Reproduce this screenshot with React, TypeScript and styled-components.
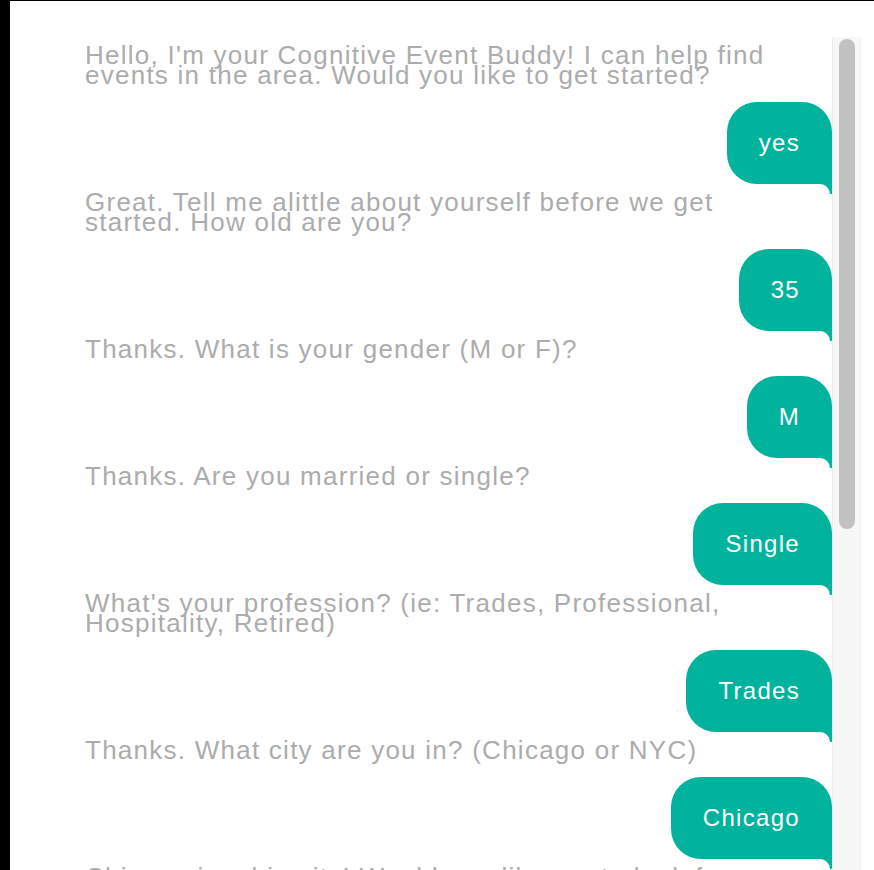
import React from "react";
import styled, { createGlobalStyle } from "styled-components";

type Message = { from: "bot" | "user"; text: string };

const messages: Message[] = [
  { from: "bot", text: "Hello, I'm your Cognitive Event Buddy! I can help find events in the area. Would you like to get started?" },
  { from: "user", text: "yes" },
  { from: "bot", text: "Great. Tell me alittle about yourself before we get started. How old are you?" },
  { from: "user", text: "35" },
  { from: "bot", text: "Thanks. What is your gender (M or F)?" },
  { from: "user", text: "M" },
  { from: "bot", text: "Thanks. Are you married or single?" },
  { from: "user", text: "Single" },
  { from: "bot", text: "What's your profession? (ie: Trades, Professional, Hospitality, Retired)" },
  { from: "user", text: "Trades" },
  { from: "bot", text: "Thanks. What city are you in? (Chicago or NYC)" },
  { from: "user", text: "Chicago" },
  { from: "bot", text: "Chicago is a big city! Would you like me to look for events this weekend?" },
  { from: "user", text: "yes" },
];

// fake scrollbar, the screenshot browser hides the real one
const thumbHeight = 490;

const GlobalStyle = createGlobalStyle`
  html, body {
    margin: 0;
    height: 100%;
    background: #000;
  }
  #root {
    height: 100%;
  }
`;

export default function App() {
  return (
    <>
      <GlobalStyle />
      <Frame>
        <ChatColumn>
          {messages.map((m, i) =>
            m.from === "bot" ? (
              <BotText key={i}>{m.text}</BotText>
            ) : (
              <UserRow key={i}>
                <Bubble>{m.text}</Bubble>
              </UserRow>
            )
          )}
        </ChatColumn>
        <ScrollTrack>
          <ScrollThumb style={{ height: thumbHeight }} />
        </ScrollTrack>
      </Frame>
    </>
  );
}

const Frame = styled.div`
  margin: 1px 0 0 10px;
  height: calc(100% - 1px);
  box-sizing: border-box;
  background: #fff;
  padding: 36px 13px 0 0;
  display: flex;
  overflow: hidden;
`;

const ChatColumn = styled.div`
  flex: 1;
  min-width: 0;
  overflow: hidden;
  padding-top: 8px;
  display: flex;
  flex-direction: column;
  font-family: "Liberation Sans", Arial, sans-serif;
`;

const ScrollTrack = styled.div`
  width: 29px;
  flex-shrink: 0;
  box-sizing: border-box;
  background: #f7f7f7;
  border-left: 1px solid #ebebeb;
  border-right: 1px solid #f0f0f0;
  padding: 2px 5px 0 6px;
`;

const ScrollThumb = styled.div`
  width: 16px;
  background: #c1c1c1;
  border-radius: 8px;
`;

const BotText = styled.div`
  margin-left: 75px;
  max-width: 715px;
  font-size: 26px;
  line-height: 20px;
  letter-spacing: 1.25px;
  color: #acacac;
`;

const UserRow = styled.div`
  display: flex;
  justify-content: flex-end;
  margin: 17px 0 8px;
`;

const Bubble = styled.div`
  position: relative;
  height: 82px;
  box-sizing: border-box;
  padding: 0 32px;
  display: flex;
  align-items: center;
  background: #01b39d;
  color: #fff;
  font-size: 24px;
  letter-spacing: 1.3px;
  border-radius: 30px 30px 0 30px;

  &::before {
    content: "";
    position: absolute;
    right: 0;
    top: 100%;
    width: 12px;
    height: 10px;
    background: #01b39d;
  }
  &::after {
    content: "";
    position: absolute;
    right: 2px;
    top: 100%;
    width: 24px;
    height: 12px;
    background: #fff;
    border-top-right-radius: 10px;
  }
`;
